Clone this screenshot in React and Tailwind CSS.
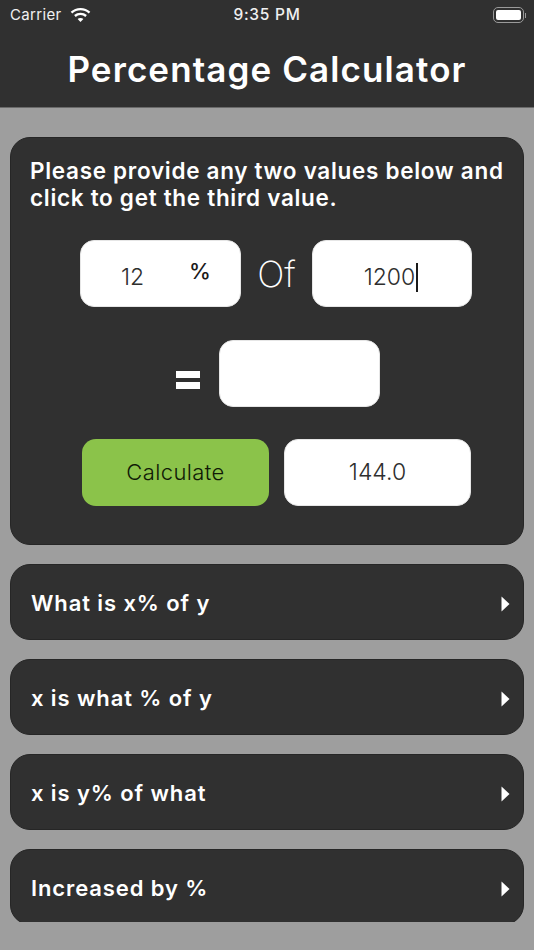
import React from 'react';

const Field = ({ className = '', children }) => (
  <div className={`h-[67px] bg-white rounded-[14px] border border-[#e6e6e6] flex items-center justify-center text-[#2e2e2e] ${className}`}>
    {children}
  </div>
);

const Row = ({ label, clip }) => (
  <div className={clip ? 'h-[73px] overflow-hidden' : ''}>
    <div className="h-[76px] bg-[#303030] border border-[#262626] rounded-[20px] flex items-center justify-between pl-[20px] pr-[13px] pt-[3px]">
      <span className="text-[22px] font-semibold tracking-[0.9px] text-white">{label}</span>
      <svg width="9" height="16" viewBox="0 0 9 16"><path d="M0.5 0.5 L8.5 8 L0.5 15.5 Z" fill="#fff" /></svg>
    </div>
  </div>
);

export default function App() {
  return (
    <div className="h-[950px] w-[534px] overflow-hidden bg-[#9e9e9e] font-['Inter',sans-serif]">
      <header className="h-[108px] bg-[#303030] border-b border-[#6a6a6a] text-white">
        <div className="h-[30px] flex items-center justify-between pl-[10px] pr-[8px] relative">
          <div className="flex items-center gap-[8px] text-[15px] tracking-[0.35px] text-[#f0f0f0]">
            <span>Carrier</span>
            <svg width="21" height="16" viewBox="0 0 21 16" fill="none" stroke="#fff" strokeWidth="2.4">
              <path d="M1.5 5.6 C6.5 0.9 14.5 0.9 19.5 5.6" />
              <path d="M4.9 9 C8 6.2 13 6.2 16.1 9" />
              <path d="M10.5 15 L7.6 12 C9.2 10.7 11.8 10.7 13.4 12 Z" fill="#fff" stroke="none" />
            </svg>
          </div>
          <span className="absolute left-0 right-0 text-center text-[15.5px] font-medium tracking-[0.75px] text-[#f0f0f0]">9:35 PM</span>
          <div className="flex items-center gap-[1px]">
            <div className="w-[31px] h-[16px] rounded-[5px] border border-[#9a9a9a] p-[2px]">
              <div className="w-full h-full bg-white rounded-[2px]" />
            </div>
            <div className="w-[1px] h-[5px] bg-[#9a9a9a]" />
          </div>
        </div>
        <h1 className="text-center text-[35px] leading-[42px] mt-[18px] font-semibold tracking-[1.1px]">Percentage Calculator</h1>
      </header>

      <main className="px-[10px] pt-[29px] flex flex-col gap-[19px]">
        <section className="h-[408px] bg-[#303030] border border-[#262626] rounded-[20px] pt-[19px] pl-[19px]">
          <p className="text-[22.5px] leading-[27px] font-semibold tracking-[0.7px] text-white w-[485px]">
            Please provide any two values below and click to get the third value.
          </p>
          <div className="mt-[29px] ml-[50px] flex items-center">
            <Field className="w-[161px] relative text-[23px] font-light">
              <span className="mr-[56px] mt-[8px]">12</span>
              <span className="absolute left-[108px] top-[14px] text-[22px] font-medium text-[#1a1a1a]">%</span>
            </Field>
            <span className="w-[71px] text-center text-[36px] font-extralight text-white">Of</span>
            <Field className="w-[160px] text-[23px] font-light">
              <span className="mt-[8px] mr-[1px]">1200</span>
              <span className="w-[2px] h-[29px] bg-[#1a1a1a] mt-[7px] mr-[2px]" />
            </Field>
          </div>
          <div className="mt-[33px] ml-[146px] flex items-center gap-[19px]">
            <div className="w-[24px] flex flex-col gap-[4px] mt-[12px]">
              <div className="h-[7px] bg-white" />
              <div className="h-[7px] bg-white" />
            </div>
            <Field className="w-[161px]" />
          </div>
          <div className="mt-[32px] ml-[52px] flex items-center gap-[15px]">
            <button className="w-[187px] h-[67px] bg-[#8bc34a] rounded-[14px] text-[22px] font-light text-[#101a06] tracking-[0.4px]">Calculate</button>
            <Field className="w-[187px] text-[23px] font-light">144.0</Field>
          </div>
        </section>

        <Row label="What is x% of y" />
        <Row label="x is what % of y" />
        <Row label="x is y% of what" />
        <Row label="Increased by %" clip />
      </main>
    </div>
  );
}
